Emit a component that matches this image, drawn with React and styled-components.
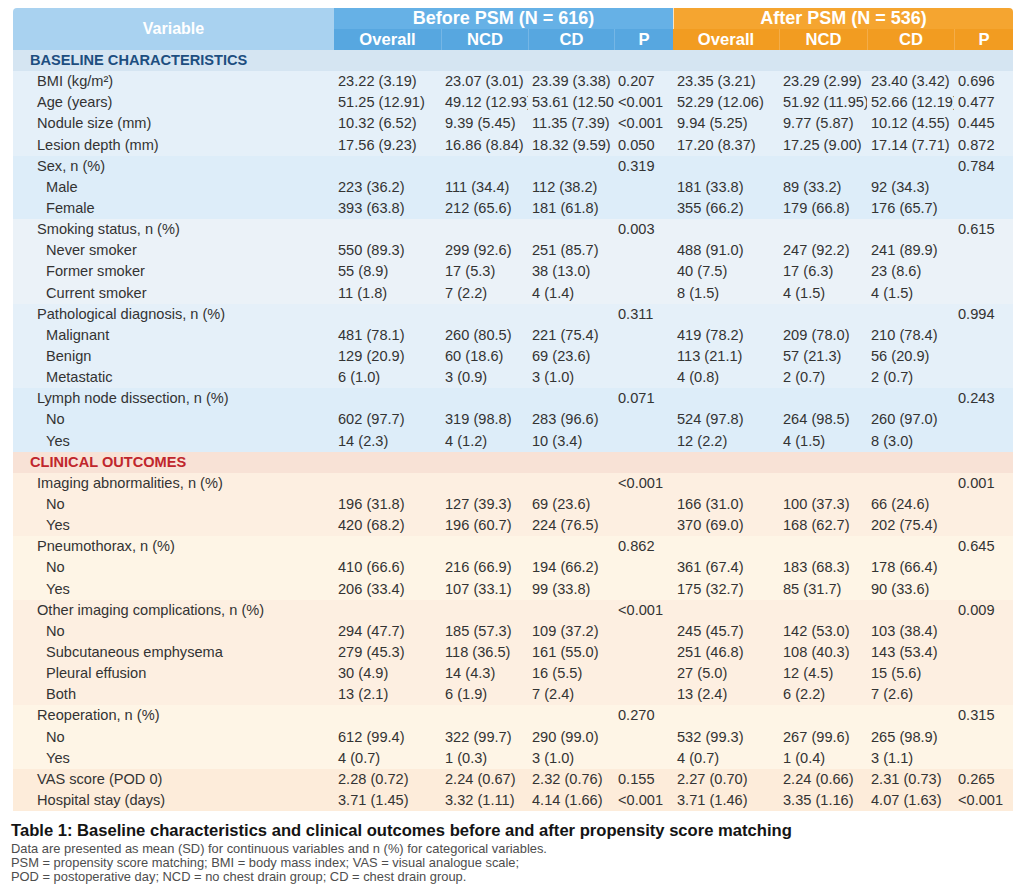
import React from "react";
import styled, { createGlobalStyle } from "styled-components";

const GlobalStyle = createGlobalStyle`
  html, body { margin: 0; padding: 0; background: #ffffff; }
  body { font-family: "Liberation Sans", Arial, sans-serif; color: #333; }
`;

const COLS = "321px 107px 87px 86px 59px 106px 88px 87px 59px";
const ROW_H = "21.15px";

const Page = styled.div`
  width: 1024px;
  box-sizing: border-box;
  padding: 7.5px 11px 0 11px;
`;

const Table = styled.div`
  margin-left: 2px;
  width: 1000px;
  border-radius: 4px 4px 0 0;
  overflow: hidden;
`;

const Head = styled.div`
  display: grid;
  grid-template-columns: ${COLS};
  grid-template-rows: 21.25px 21.25px;
  color: #ffffff;
  font-weight: bold;
`;

const VarHead = styled.div`
  grid-row: 1 / span 2;
  grid-column: 1;
  background: #a9d2f0;
  display: flex;
  align-items: center;
  justify-content: center;
  font-size: 16px;
`;

const GroupHead = styled.div`
  grid-row: 1;
  grid-column: ${(p) => p.$col} / span 4;
  background: ${(p) => (p.$after ? "#f5a530" : "#66b1e6")};
  border-left: ${(p) => (p.$after ? "1px solid rgba(255,255,255,0.7)" : "none")};
  display: flex;
  align-items: center;
  justify-content: center;
  font-size: 18px;
  line-height: 21px;
  white-space: nowrap;
`;

const SubHead = styled.div`
  grid-row: 2;
  background: ${(p) => (p.$after ? "#f29c21" : "#57a7e0")};
  border-left: ${(p) => (p.$sep ? "1px solid rgba(255,255,255,0.18)" : "none")};
  display: flex;
  align-items: center;
  justify-content: center;
  font-size: 16.6px;
  line-height: 21px;
`;

const TONES = {
  secBlue: "#d5e5f2",
  blueA: "#e5f0f9",
  blueB: "#ddedf9",
  pale: "#ebf2f8",
  secRed: "#f8e2d6",
  peach: "#fdefe1",
  cream: "#fef5e6",
  peach2: "#fdecda",
};

const Row = styled.div`
  display: grid;
  grid-template-columns: ${COLS};
  height: ${ROW_H};
  background: ${(p) => TONES[p.$tone]};
  font-size: 14.6px;
  line-height: ${ROW_H};
`;

const SectionTitle = styled.div`
  grid-column: 1 / -1;
  padding-left: 17px;
  font-weight: bold;
  color: ${(p) => p.$color};
  white-space: nowrap;
`;

const Label = styled.div`
  padding-left: ${(p) => (p.$sub ? "33px" : "24px")};
  white-space: nowrap;
  overflow: hidden;
  color: #333;
`;

const Cell = styled.div`
  padding-left: 4px;
  white-space: nowrap;
  overflow: hidden;
  color: #333;
`;

const Caption = styled.div`
  margin-top: 10px;
  font-size: 16.6px;
  font-weight: bold;
  color: #141414;
  line-height: 20px;
  white-space: nowrap;
`;

const Notes = styled.div`
  margin-top: 1px;
  font-size: 12.9px;
  line-height: 14px;
  color: #4d4d4d;
`;

const NoteLine = styled.div`
  white-space: nowrap;
`;

const S = (label, vals, tone, sub = false) => ({ label, vals, tone, sub });
const blankP = (tone, label, pb, pa) => ({ label, vals: ["", "", "", pb, "", "", "", pa], tone });

const baseline = [
  S("BMI (kg/m²)", ["23.22 (3.19)", "23.07 (3.01)", "23.39 (3.38)", "0.207", "23.35 (3.21)", "23.29 (2.99)", "23.40 (3.42)", "0.696"], "blueA"),
  S("Age (years)", ["51.25 (12.91)", "49.12 (12.93)", "53.61 (12.50)", "<0.001", "52.29 (12.06)", "51.92 (11.95)", "52.66 (12.19)", "0.477"], "blueA"),
  S("Nodule size (mm)", ["10.32 (6.52)", "9.39 (5.45)", "11.35 (7.39)", "<0.001", "9.94 (5.25)", "9.77 (5.87)", "10.12 (4.55)", "0.445"], "blueA"),
  S("Lesion depth (mm)", ["17.56 (9.23)", "16.86 (8.84)", "18.32 (9.59)", "0.050", "17.20 (8.37)", "17.25 (9.00)", "17.14 (7.71)", "0.872"], "blueA"),
  blankP("blueB", "Sex, n (%)", "0.319", "0.784"),
  S("Male", ["223 (36.2)", "111 (34.4)", "112 (38.2)", "", "181 (33.8)", "89 (33.2)", "92 (34.3)", ""], "blueB", true),
  S("Female", ["393 (63.8)", "212 (65.6)", "181 (61.8)", "", "355 (66.2)", "179 (66.8)", "176 (65.7)", ""], "blueB", true),
  blankP("pale", "Smoking status, n (%)", "0.003", "0.615"),
  S("Never smoker", ["550 (89.3)", "299 (92.6)", "251 (85.7)", "", "488 (91.0)", "247 (92.2)", "241 (89.9)", ""], "pale", true),
  S("Former smoker", ["55 (8.9)", "17 (5.3)", "38 (13.0)", "", "40 (7.5)", "17 (6.3)", "23 (8.6)", ""], "pale", true),
  S("Current smoker", ["11 (1.8)", "7 (2.2)", "4 (1.4)", "", "8 (1.5)", "4 (1.5)", "4 (1.5)", ""], "pale", true),
  blankP("blueA", "Pathological diagnosis, n (%)", "0.311", "0.994"),
  S("Malignant", ["481 (78.1)", "260 (80.5)", "221 (75.4)", "", "419 (78.2)", "209 (78.0)", "210 (78.4)", ""], "blueA", true),
  S("Benign", ["129 (20.9)", "60 (18.6)", "69 (23.6)", "", "113 (21.1)", "57 (21.3)", "56 (20.9)", ""], "blueA", true),
  S("Metastatic", ["6 (1.0)", "3 (0.9)", "3 (1.0)", "", "4 (0.8)", "2 (0.7)", "2 (0.7)", ""], "blueA", true),
  blankP("blueB", "Lymph node dissection, n (%)", "0.071", "0.243"),
  S("No", ["602 (97.7)", "319 (98.8)", "283 (96.6)", "", "524 (97.8)", "264 (98.5)", "260 (97.0)", ""], "blueB", true),
  S("Yes", ["14 (2.3)", "4 (1.2)", "10 (3.4)", "", "12 (2.2)", "4 (1.5)", "8 (3.0)", ""], "blueB", true),
];

const clinical = [
  blankP("peach", "Imaging abnormalities, n (%)", "<0.001", "0.001"),
  S("No", ["196 (31.8)", "127 (39.3)", "69 (23.6)", "", "166 (31.0)", "100 (37.3)", "66 (24.6)", ""], "peach", true),
  S("Yes", ["420 (68.2)", "196 (60.7)", "224 (76.5)", "", "370 (69.0)", "168 (62.7)", "202 (75.4)", ""], "peach", true),
  blankP("cream", "Pneumothorax, n (%)", "0.862", "0.645"),
  S("No", ["410 (66.6)", "216 (66.9)", "194 (66.2)", "", "361 (67.4)", "183 (68.3)", "178 (66.4)", ""], "cream", true),
  S("Yes", ["206 (33.4)", "107 (33.1)", "99 (33.8)", "", "175 (32.7)", "85 (31.7)", "90 (33.6)", ""], "cream", true),
  blankP("peach", "Other imaging complications, n (%)", "<0.001", "0.009"),
  S("No", ["294 (47.7)", "185 (57.3)", "109 (37.2)", "", "245 (45.7)", "142 (53.0)", "103 (38.4)", ""], "peach", true),
  S("Subcutaneous emphysema", ["279 (45.3)", "118 (36.5)", "161 (55.0)", "", "251 (46.8)", "108 (40.3)", "143 (53.4)", ""], "peach", true),
  S("Pleural effusion", ["30 (4.9)", "14 (4.3)", "16 (5.5)", "", "27 (5.0)", "12 (4.5)", "15 (5.6)", ""], "peach", true),
  S("Both", ["13 (2.1)", "6 (1.9)", "7 (2.4)", "", "13 (2.4)", "6 (2.2)", "7 (2.6)", ""], "peach", true),
  blankP("cream", "Reoperation, n (%)", "0.270", "0.315"),
  S("No", ["612 (99.4)", "322 (99.7)", "290 (99.0)", "", "532 (99.3)", "267 (99.6)", "265 (98.9)", ""], "cream", true),
  S("Yes", ["4 (0.7)", "1 (0.3)", "3 (1.0)", "", "4 (0.7)", "1 (0.4)", "3 (1.1)", ""], "cream", true),
  S("VAS score (POD 0)", ["2.28 (0.72)", "2.24 (0.67)", "2.32 (0.76)", "0.155", "2.27 (0.70)", "2.24 (0.66)", "2.31 (0.73)", "0.265"], "peach2"),
  S("Hospital stay (days)", ["3.71 (1.45)", "3.32 (1.11)", "4.14 (1.66)", "<0.001", "3.71 (1.46)", "3.35 (1.16)", "4.07 (1.63)", "<0.001"], "peach2"),
];

const SUBS = ["Overall", "NCD", "CD", "P"];

function DataRow({ row }) {
  return (
    <Row $tone={row.tone}>
      <Label $sub={row.sub}>{row.label}</Label>
      {row.vals.map((v, i) => (
        <Cell key={i}>{v}</Cell>
      ))}
    </Row>
  );
}

export default function App() {
  return (
    <>
      <GlobalStyle />
      <Page>
        <Table>
          <Head>
            <VarHead>Variable</VarHead>
            <GroupHead $col={2}>Before PSM (N = 616)</GroupHead>
            <GroupHead $col={6} $after>After PSM (N = 536)</GroupHead>
            {SUBS.map((s, i) => (
              <SubHead key={"b" + s} $sep={i > 0}>{s}</SubHead>
            ))}
            {SUBS.map((s, i) => (
              <SubHead key={"a" + s} $after $sep={i > 0}>{s}</SubHead>
            ))}
          </Head>
          <Row $tone="secBlue">
            <SectionTitle $color="#1d4e80">BASELINE CHARACTERISTICS</SectionTitle>
          </Row>
          {baseline.map((r, i) => (
            <DataRow key={"bl" + i} row={r} />
          ))}
          <Row $tone="secRed">
            <SectionTitle $color="#c0262c">CLINICAL OUTCOMES</SectionTitle>
          </Row>
          {clinical.map((r, i) => (
            <DataRow key={"cl" + i} row={r} />
          ))}
        </Table>
        <Caption>
          Table 1: Baseline characteristics and clinical outcomes before and after propensity score matching
        </Caption>
        <Notes>
          <NoteLine>Data are presented as mean (SD) for continuous variables and n (%) for categorical variables.</NoteLine>
          <NoteLine>PSM = propensity score matching; BMI = body mass index; VAS = visual analogue scale;</NoteLine>
          <NoteLine>POD = postoperative day; NCD = no chest drain group; CD = chest drain group.</NoteLine>
        </Notes>
      </Page>
    </>
  );
}
